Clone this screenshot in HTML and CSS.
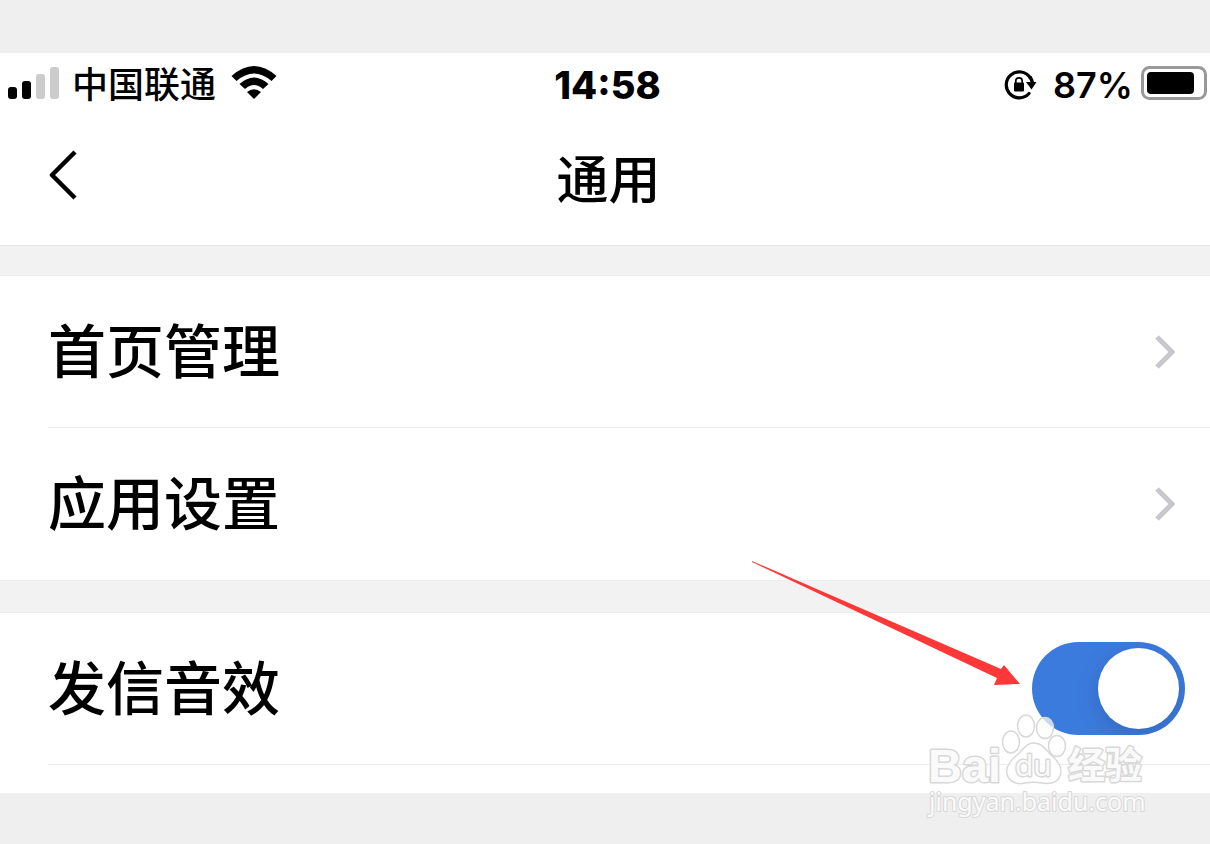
FILE: index.html
```html
<!DOCTYPE html>
<html lang="zh-CN">
<head>
<meta charset="utf-8">
<title>通用</title>
<link rel="stylesheet" href="styles.css">
</head>
<body>
<div class="screen">
<div class="status-bar">
<div class="status-left">
<svg class="signal" width="52" height="33" viewBox="0 0 52 33">
<rect x="0" y="20" width="9" height="12" rx="3"/>
<rect x="14" y="14" width="9" height="18" rx="3"/>
<rect x="28" y="7" width="9" height="25" rx="3" fill="#ccc"/>
<rect x="42" y="0" width="9" height="32" rx="3" fill="#ccc"/>
</svg>
<span class="carrier">中国联通</span>
<svg class="wifi" width="46" height="34" viewBox="0 0 46 34">
<path d="M0.5 10 Q23 -10 45.500 10 L40.500 15 Q23 0 5.500 15 Z"/>
<path d="M8.500 18 Q23 5 37.500 18 L32 23 Q23 15 14 23 Z"/>
<path d="M16 26 Q23 20.500 30 26 L23 33 Z"/>
</svg>
</div>
<span class="time">14:58</span>
<div class="status-right">
<svg class="lock" width="33" height="30" viewBox="0 0 33 30">
<path d="M26 7.500 A13 13 0 1 0 25 23.500" fill="none" stroke="#000" stroke-width="3.200" stroke-linecap="round"/>
<path d="M26 7 Q28 10 28.500 13" fill="none" stroke="#000" stroke-width="3.500"/>
<path d="M22 12 H32.500 L27.500 19.500 Z"/>
<rect x="10" y="12.500" width="10" height="9" rx="1"/>
<path d="M11.800 13 V11 A3.200 3.200 0 0 1 18.200 11 V13" fill="none" stroke="#000" stroke-width="1.700"/>
</svg>
<span class="percent">87%</span>
<svg class="battery" width="66" height="34" viewBox="0 0 66 34">
<rect x="1.500" y="1.500" width="63" height="31" rx="7" fill="#fff" stroke="#999" stroke-width="3"/>
<rect x="6" y="6" width="47" height="22" rx="4"/>
</svg>
</div>
</div>

<header class="nav">
<button class="back" aria-label="返回">
<svg width="28" height="50" viewBox="0 0 28 50"><path d="M26 2 L3 25 L26 48" fill="none" stroke="#000" stroke-width="4.500" stroke-linejoin="round"/></svg>
</button>
<h1>通用</h1>
</header>

<main>
<div class="group">
<a class="row" href="#">
<span>首页管理</span>
<svg class="chevron" width="20" height="34" viewBox="0 0 20 34"><path d="M2 2 L17 17 L2 32" fill="none" stroke="#c7c7cc" stroke-width="5"/></svg>
</a>
<a class="row" href="#">
<span>应用设置</span>
<svg class="chevron" width="20" height="34" viewBox="0 0 20 34"><path d="M2 2 L17 17 L2 32" fill="none" stroke="#c7c7cc" stroke-width="5"/></svg>
</a>
</div>
<div class="group last">
<div class="row">
<label for="sound">发信音效</label>
<input class="switch" type="checkbox" id="sound" role="switch" checked>
</div>
<svg class="arrow" width="268" height="125" viewBox="0 0 268 125"><path d="M0 0 L0 1 L245 117 L242 124 L268 123 L252 104 L249 108 Z" fill="#fc3838"/></svg>
<svg class="watermark" width="224" height="112" viewBox="0 0 224 112">
<g class="paw">
<ellipse cx="86" cy="30" rx="8.500" ry="11"/>
<ellipse cx="101" cy="14" rx="8.500" ry="11"/>
<ellipse cx="120" cy="16" rx="8.500" ry="10.500"/>
<ellipse cx="132" cy="34" rx="8.500" ry="10.500"/>
<path d="M109 31 C117 31 121 38 126 43 C133 49 138 55 135 64 C132 72 124 72 117 71 C111 70 106 70 100 71 C92 73 84 70 82 62 C80 54 86 48 92 43 C98 38 101 31 109 31 Z"/>
</g>
<g class="mark">
<text class="brand" x="3" y="70">Bai</text>
<text class="brand-du" x="90" y="64">du</text>
<text class="brand-cn" x="143" y="67">经验</text>
<text class="site" x="4" y="99">jingyan.baidu.com</text>
</g>
</svg>
</div>
</main>
</div>
</body>
</html>
```
FILE: styles.css
```css
body {
	background-color: #efefef;
	color: #000;
	font-family: Inter, "Noto Sans CJK SC", sans-serif;
	margin: 0;
}

.screen {
	background-color: #fff;
	margin: 53px 0 50px;
}

.status-bar {
	align-items: center;
	display: grid;
	grid-template-columns: 1fr auto 1fr;
	height: 64px;
	padding: 0 3px 0 8px;
}

.status-left,
.status-right {
	align-items: center;
	display: flex;
}

.status-right {
	justify-content: flex-end;
}

.signal,
.wifi,
.battery {
	margin-bottom: 4px;
}

.carrier {
	font-size: 36px;
	font-weight: 500;
	line-height: 40px;
	margin: 0 15px 0 12px;
}

.time {
	font-size: 38px;
	font-weight: 800;
	line-height: 40px;
}

.percent {
	font-size: 36px;
	font-weight: 600;
	line-height: 40px;
	margin: 0 8px 0 16px;
}

.nav {
	align-items: center;
	border-bottom: 1px solid #e4e4e4;
	display: grid;
	grid-template-columns: 1fr auto 1fr;
	height: 128px;
	padding: 0 42px 0 49px;
}

.nav h1 {
	font-size: 52px;
	font-weight: 500;
	line-height: 60px;
	margin: 0;
}

.back {
	background-color: transparent;
	border: none;
	cursor: pointer;
	display: flex;
	justify-self: start;
	padding: 0 0 12px;
}

main {
	background-color: #f2f2f2;
	display: flex;
	flex-direction: column;
	gap: 31px;
	padding-top: 29px;
}

.group {
	background-color: #fff;
	border-top: 1px solid #eee;
	padding-left: 48px;
	position: relative;
}

.group:first-child {
	border-bottom: 1px solid #eee;
}

.row {
	align-items: center;
	border-bottom: 1px solid #ededed;
	box-sizing: border-box;
	color: #000;
	display: flex;
	font-size: 58px;
	font-weight: 500;
	height: 152px;
	justify-content: space-between;
	line-height: 70px;
	padding-right: 35px;
	text-decoration: none;
}

.group:first-child .row:last-child {
	border-bottom: none;
}

.last {
	padding-bottom: 28px;
}

.last .row {
	padding-right: 25px;
}

.switch {
	appearance: none;
	background-color: #3c7bde;
	border-radius: 47px;
	cursor: pointer;
	height: 93px;
	margin: 0;
	overflow: hidden;
	padding: 6px;
	width: 153px;
}

.switch::before {
	background-color: #fff;
	border-radius: 50%;
	box-shadow: 0 6px 24px rgba(0, 0, 0, 0.15);
	content: "";
	display: block;
	height: 81px;
	margin-left: auto;
	width: 81px;
}

.arrow {
	position: absolute;
	right: 190px;
	top: -52px;
}

.watermark {
	bottom: -31px;
	pointer-events: none;
	position: absolute;
	right: 61px;
}

.paw {
	fill: rgba(255, 255, 255, 0.7);
	stroke: #d8d8d8;
	stroke-width: 1.5;
}

.mark {
	fill: #fafafa;
	paint-order: stroke;
	stroke: #d8d8d8;
	stroke-linejoin: round;
	stroke-width: 3;
}

.brand {
	font-family: "Liberation Sans", Arial, sans-serif;
	font-size: 47px;
	font-weight: 700;
}

.brand-du {
	font-family: "Open Sans", sans-serif;
	font-size: 30px;
}

.brand-cn {
	font-family: "Noto Sans CJK SC", sans-serif;
	font-size: 37px;
	font-weight: 700;
}

.site {
	font-family: "Noto Sans", sans-serif;
	font-size: 25px;
	stroke-width: 2;
}
```
